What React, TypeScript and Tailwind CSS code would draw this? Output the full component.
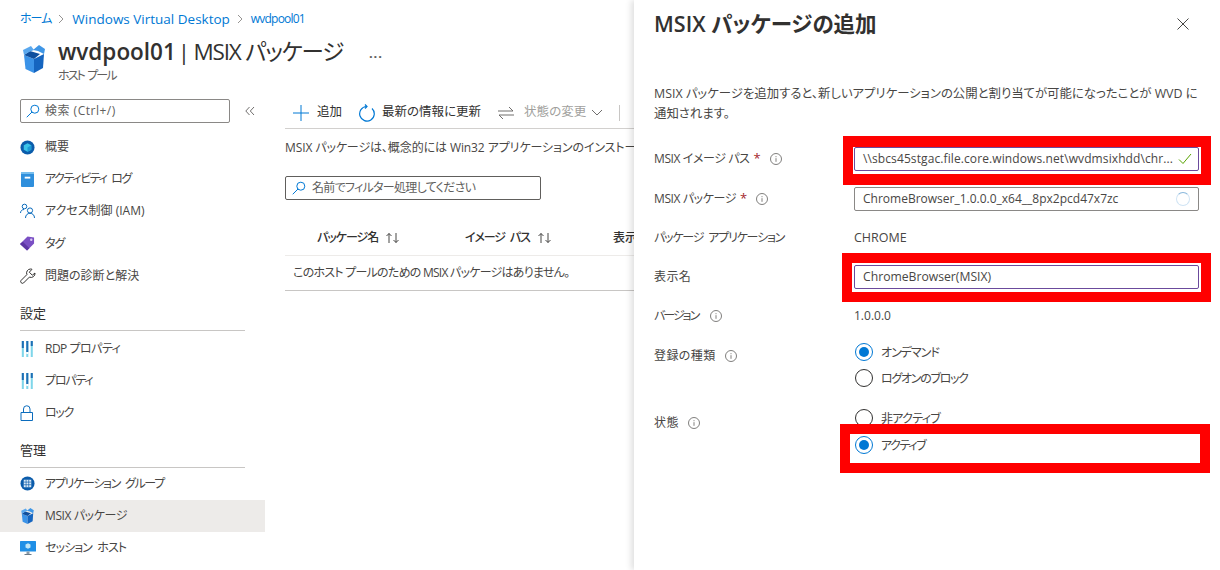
import React from "react";

const font = {
  fontFamily: '"Open Sans", "Noto Sans CJK JP", sans-serif',
  fontFeatureSettings: '"palt"',
};

function SearchIcon() {
  return (
    <svg viewBox="0 0 14 14" className="h-[14px] w-[14px] shrink-0" fill="none" stroke="#0078d4" strokeWidth="1">
      <circle cx="8.800" cy="5.200" r="4" />
      <path d="M5.900 8.100 1 13" strokeLinecap="round" />
    </svg>
  );
}

function InfoIcon() {
  return (
    <svg viewBox="0 0 12 12" className="h-3 w-3 shrink-0" fill="none" stroke="#605e5c" strokeWidth="0.8">
      <circle cx="6" cy="6" r="5.500" />
      <path d="M6 5.200v3.600M6 3.200v1" />
    </svg>
  );
}

function SortIcon() {
  return (
    <svg viewBox="0 0 16 12" className="h-3 w-4 shrink-0" fill="none" stroke="#323130" strokeWidth="0.9">
      <path d="M4 11V1.500M1.500 4 4 1.500 6.500 4M11 1v9.500M8.500 8l2.500 2.500L13.500 8" />
    </svg>
  );
}

function BoxIcon({ w, h }: { w: number; h: number }) {
  return (
    <svg viewBox="0 0 22 28" width={w} height={h} className="shrink-0">
      <path d="M1 10 11 14v14L2.500 24z" fill="#3b93e8" />
      <path d="M11 14l10-5-1 14-9 5z" fill="#1565c0" />
      <path d="M11 14 1 10l6-4 10 3z" fill="#0f4f9e" />
      <path d="M1 10 0 5l8-4 3 4-5 2z" fill="#5aa8ee" />
      <path d="M10 5l6-5 6 4-1 5-6-3z" fill="#3f96e6" />
    </svg>
  );
}

function SlidersIcon() {
  return (
    <svg viewBox="0 0 16 16" preserveAspectRatio="none" className="ml-[1px] h-4 w-[13px] shrink-0">
      <rect x="1" y="0" width="2.500" height="16" fill="#7fd6ea" />
      <rect x="1" y="0" width="2.500" height="7" fill="#1f6fb5" />
      <rect x="6.500" y="0" width="2.500" height="16" fill="#7fd6ea" />
      <rect x="6.500" y="0" width="2.500" height="11" fill="#1f6fb5" />
      <rect x="6.500" y="11" width="2.500" height="2" fill="#ffffff" />
      <rect x="12" y="0" width="2.500" height="16" fill="#7fd6ea" />
      <rect x="12" y="0" width="2.500" height="5" fill="#1f6fb5" />
    </svg>
  );
}

function OverviewIcon() {
  return (
    <svg viewBox="0 0 16 16" className="h-[15px] w-[15px] shrink-0">
      <circle cx="8" cy="8" r="7.500" fill="#0b5cab" />
      <path d="M8 3.500 12 5.700v4.600L8 12.500 4 10.300V5.700z" fill="#3cc4e8" />
      <path d="M8 8 12 5.700v4.600L8 12.500z" fill="#1c9ad6" />
    </svg>
  );
}

function LogIcon() {
  return (
    <svg viewBox="0 0 14 16" className="ml-[1px] h-[15px] w-[13px] shrink-0">
      <rect width="14" height="16" rx="1" fill="#2f8fdc" />
      <rect x="0" y="0" width="14" height="2" fill="#7cc0ee" />
      <rect x="4" y="5" width="6" height="2" fill="#ffffff" />
    </svg>
  );
}

function UsersIcon() {
  return (
    <svg viewBox="0 0 16 16" className="h-4 w-4 shrink-0" fill="none" stroke="#0b6cbd" strokeWidth="1">
      <circle cx="4.500" cy="3.500" r="2.300" />
      <path d="M.5 10c0-2 1.500-3.500 3.500-3.500" />
      <circle cx="10" cy="7.500" r="2.600" />
      <path d="M5.500 15c0-3 2-4.700 4.500-4.700s4.500 1.700 4.500 4.700" />
    </svg>
  );
}

function TagIcon() {
  return (
    <svg viewBox="0 0 16 16" className="h-[15px] w-[15px] shrink-0">
      <path d="M0 8.500 8 .5l7 1v6.500L7.500 15.500z" fill="#7a4fc4" />
      <path d="M0 8.500 7.500 15.500 10 13 3 6z" fill="#5c35a3" />
      <circle cx="12" cy="4" r="1.300" fill="#d9c9f2" />
    </svg>
  );
}

function WrenchIcon() {
  return (
    <svg viewBox="0 0 16 16" className="h-4 w-4 shrink-0" fill="none" stroke="#323130" strokeWidth="1">
      <path d="M10.500 1a4 4 0 0 0-3.600 5.600L1 12.500a1.800 1.800 0 0 0 2.500 2.500l5.900-5.900A4 4 0 0 0 15 5l-2.700 2.200-3-3L12 1.300A4 4 0 0 0 10.500 1z" strokeLinejoin="round" />
    </svg>
  );
}

function LockIcon() {
  return (
    <svg viewBox="0 0 14 16" className="h-4 w-[14px] shrink-0" fill="none" stroke="#0b6cbd" strokeWidth="1">
      <path d="M1 7.500h11.500V15.500H1z" />
      <path d="M3.500 7.500V4a3.200 3.200 0 0 1 6.500 0v3.500" />
    </svg>
  );
}

function GridIcon() {
  return (
    <svg viewBox="0 0 16 16" className="h-[15px] w-[15px] shrink-0">
      <circle cx="8" cy="8" r="7.500" fill="#0b5cab" />
      <path d="M4 4h8v8H4z" fill="#dcebf7" />
      <path d="M6.500 4v8M9.300 4v8M4 6.500h8M4 9.300h8" stroke="#0b5cab" strokeWidth="0.7" />
    </svg>
  );
}

function MonitorIcon() {
  return (
    <svg viewBox="0 0 16 16" className="h-4 w-4 shrink-0">
      <rect x="0" y="1" width="16" height="10.500" rx="0.500" fill="#1f8fe6" />
      <path d="M8 3.200 10.500 4.600v2.800L8 8.800 5.500 7.400V4.600z" fill="#bfe6f7" />
      <path d="M6.500 11.500h3V14h-3z" fill="#8a9aa8" />
      <path d="M4.500 14h7v1h-7z" fill="#6b7b88" />
    </svg>
  );
}

function Chevron() {
  return (
    <svg viewBox="0 0 6 10" className="h-[10px] w-[6px] shrink-0" fill="none" stroke="#8a8886" strokeWidth="0.9">
      <path d="M1 1l4 4-4 4" />
    </svg>
  );
}

function NavItem({ icon, label, active, tracking }: { icon: React.ReactNode; label: string; active?: boolean; tracking?: string }) {
  return (
    <div className={`flex h-[32.2px] items-center pl-[20px] text-[12px] text-[#484644] ${active ? "bg-[#edebe9]" : ""}`}>
      <span className="flex w-[25px] shrink-0 items-center">{icon}</span>
      <span className={tracking}>{label}</span>
    </div>
  );
}

function SectionTitle({ children }: { children: React.ReactNode }) {
  return (
    <div className="mx-[20px] flex h-[32px] items-end border-b border-[#c8c6c4] pb-[8px] text-[13px] leading-[18px] text-[#323130]">
      {children}
    </div>
  );
}

function Radio({ label, checked, tracking }: { label: string; checked?: boolean; tracking: string }) {
  return (
    <div className="flex h-[18px] items-center gap-[8px] text-[12px] text-[#484644]">
      <span
        className={`flex h-[18px] w-[18px] items-center justify-center rounded-full border ${checked ? "border-[#0078d4]" : "border-[#323130]"}`}
      >
        {checked && <span className="h-[10px] w-[10px] rounded-full bg-[#0078d4]" />}
      </span>
      <span className={`pt-[1px] ${tracking}`}>{label}</span>
    </div>
  );
}

function FieldLabel({ text, required, info, tracking, infoGap }: { text: string; required?: boolean; info?: boolean; tracking?: string; infoGap?: string }) {
  return (
    <div className="flex w-[200px] shrink-0 items-center text-[12px] text-[#484644]">
      <span className={tracking}>{text}</span>
      {required && <span className="ml-[4px] text-[13px] text-[#a4262c]">*</span>}
      {info && (
        <span className={`flex ${infoGap ?? "ml-[9px]"}`}>
          <InfoIcon />
        </span>
      )}
    </div>
  );
}

export default function App() {
  return (
    <div style={font} className="relative flex h-[570px] w-[1220px] overflow-hidden bg-white text-[#323130]">
      {/* left blade */}
      <div className="flex w-[634px] shrink-0 flex-col">
        <div className="flex h-[38px] items-center pl-[20px] text-[#0078d4]">
          <span className="text-[12px] tracking-[-1px]">ホーム</span>
          <span className="ml-[7px] mr-[8px] flex"><Chevron /></span>
          <span className="text-[13.500px]">Windows Virtual Desktop</span>
          <span className="ml-[7px] mr-[8px] flex"><Chevron /></span>
          <span className="text-[12px] tracking-[-0.800px]">wvdpool01</span>
        </div>
        <div className="flex h-[52px] pl-[23px]">
          <span className="mt-[7px] flex w-[35px] shrink-0">
            <BoxIcon w={22} h={28} />
          </span>
          <div>
            <div className="whitespace-nowrap text-[22.500px] leading-[28px] text-[#323130]">
              <span className="font-semibold">wvdpool01</span>{" "}
              <span className="ml-[-4px] tracking-[-1.200px]">| MSIX パッケージ</span>
              <span className="ml-[26px] align-[2px] text-[13px] font-bold tracking-[1px] text-[#605e5c]">...</span>
            </div>
            <div className="mt-[2px] text-[12px] leading-[14px] tracking-[-1.900px] [word-spacing:2px] text-[#605e5c]">ホスト プール</div>
          </div>
        </div>
        <div className="flex min-h-0 flex-1">
          {/* sidebar */}
          <div className="w-[265px] shrink-0">
            <div className="mt-[9px] flex h-[24px] items-center pl-[20px]">
              <div className="flex h-[24px] w-[210px] items-center gap-[5px] rounded-[2px] border border-[#8a8886] pl-[5px] text-[12px] tracking-[0.500px] text-[#605e5c]">
                <SearchIcon />
                <span>検索 (Ctrl+/)</span>
              </div>
              <svg viewBox="0 0 10 10" className="ml-[15px] h-[10px] w-[10px]" fill="none" stroke="#605e5c" strokeWidth="0.9">
                <path d="M4.500 1 .8 5l3.700 4M9 1 5.300 5 9 9" />
              </svg>
            </div>
            <div className="mt-[8px]">
              <NavItem icon={<OverviewIcon />} label="概要" />
              <NavItem icon={<LogIcon />} label="アクティビティ ログ" tracking="tracking-[-1.400px] [word-spacing:3px]" />
              <NavItem icon={<UsersIcon />} label="アクセス制御 (IAM)" />
              <NavItem icon={<TagIcon />} label="タグ" tracking="tracking-[-1px]" />
              <NavItem icon={<WrenchIcon />} label="問題の診断と解決" />
            </div>
            <div className="mt-[7px]">
              <SectionTitle>設定</SectionTitle>
              <div className="mt-[2px]">
                <NavItem icon={<SlidersIcon />} label="RDP プロパティ" tracking="tracking-[-0.500px]" />
                <NavItem icon={<SlidersIcon />} label="プロパティ" tracking="tracking-[-1.200px]" />
                <NavItem icon={<LockIcon />} label="ロック" tracking="tracking-[-1.300px]" />
              </div>
            </div>
            <div className="mt-[6px]">
              <SectionTitle>管理</SectionTitle>
              <NavItem icon={<GridIcon />} label="アプリケーション グループ" tracking="tracking-[-1.300px] [word-spacing:3px]" />
              <NavItem icon={<span className="ml-[1px] flex"><BoxIcon w={13} h={16} /></span>} label="MSIX パッケージ" active tracking="tracking-[-0.400px]" />
              <NavItem icon={<MonitorIcon />} label="セッション ホスト" tracking="tracking-[-0.900px] [word-spacing:3px]" />
            </div>
          </div>
          {/* content */}
          <div className="min-w-0 flex-1 pl-[20px]">
            <div className="mt-[7px] flex h-[32px] items-center border-b border-[#d2d0ce] pl-[8px] text-[12.500px] text-[#323130]">
              <svg viewBox="0 0 16 16" className="h-4 w-4" fill="none" stroke="#0078d4" strokeWidth="1">
                <path d="M8 0v16M0 8h16" />
              </svg>
              <span className="ml-[8px]">追加</span>
              <svg viewBox="0 0 18 18" className="ml-[16px] h-[18px] w-[18px]" fill="none" stroke="#0078d4" strokeWidth="1.200">
                <path d="M8.500 2.500A7.300 7.300 0 1 0 14 4.500" />
                <path d="M7 .5 9 2.500 7 4.500" />
              </svg>
              <span className="ml-[6px]">最新の情報に更新</span>
              <svg viewBox="0 0 16 14" className="ml-[17px] h-[14px] w-4" fill="none" stroke="#605e5c" strokeWidth="0.9">
                <path d="M0 5h15M11 1l4 4M16 9H1M5 13 1 9" />
              </svg>
              <span className="ml-[10px] text-[#a19f9d]">状態の変更</span>
              <svg viewBox="0 0 12 8" className="ml-[5px] h-[8px] w-3" fill="none" stroke="#605e5c" strokeWidth="0.9">
                <path d="M1 1l5 5 5-5" />
              </svg>
              <span className="ml-[16px] h-[16px] border-l border-[#c8c6c4]" />
            </div>
            <div className="mt-[10px] whitespace-nowrap text-[12px] leading-[18px] tracking-[-0.100px] text-[#484644]">
              MSIX パッケージは、概念的には Win32 アプリケーションのインストール
            </div>
            <div className="mt-[19px] flex h-[24px] w-[256px] items-center gap-[6px] rounded-[2px] border border-[#605e5c] pl-[6px] text-[12px] tracking-[-0.700px] text-[#605e5c]">
              <SearchIcon />
              <span>名前でフィルター処理してください</span>
            </div>
            <div className="mt-[26px] flex h-[30px] items-center whitespace-nowrap border-b border-[#edebe9] pb-[5px] text-[12px] font-medium text-[#323130]">
              <div className="flex w-[148px] shrink-0 items-center gap-[7px] pl-[32px]">
                <span className="tracking-[-1px]">パッケージ名</span>
                <SortIcon />
              </div>
              <div className="flex w-[148px] shrink-0 items-center gap-[7px] pl-[32px]">
                <span className="tracking-[-1.100px] [word-spacing:3px]">イメージ パス</span>
                <SortIcon />
              </div>
              <div className="pl-[32px]">表示</div>
            </div>
            <div className="flex h-[35px] items-center whitespace-nowrap border-b border-[#c8c6c4] pl-[8px] text-[12px] tracking-[-0.750px] text-[#484644]">
              このホスト プールのための MSIX パッケージはありません。
            </div>
          </div>
        </div>
      </div>

      {/* add package panel */}
      <div className="absolute bottom-0 left-[634px] right-0 top-0 bg-white pl-[20px] pr-[21px] shadow-[-3px_0_6px_rgba(0,0,0,0.12)]">
        <div className="flex h-[47px] items-center justify-between">
          <div className="text-[21.500px] font-semibold leading-[28px] text-[#323130]">MSIX パッケージの追加</div>
          <svg viewBox="0 0 12 12" className="mr-[10px] h-3 w-3" fill="none" stroke="#323130" strokeWidth="0.9">
            <path d="M.5.5l11 11M11.500.5l-11 11" />
          </svg>
        </div>
        <div className="mt-[37px] whitespace-nowrap text-[12.400px] leading-[20px] text-[#484644]">
          MSIX パッケージを追加すると、新しいアプリケーションの公開と割り当てが可能になったことが WVD に
          <br />
          通知されます。
        </div>
        <div className="mt-[23px] flex h-[24px]">
          <FieldLabel text="MSIX イメージ パス" required info tracking="tracking-[-0.400px]" />
          <div className="flex w-[345px] items-center rounded-[2px] border border-[#6b4a9c] pl-[8px] pr-[6px] text-[12px] tracking-[0.100px] text-[#484644]">
            <span className="min-w-0 flex-1 whitespace-nowrap">\\sbcs45stgac.file.core.windows.net\wvdmsixhdd\chr...</span>
            <svg viewBox="0 0 14 12" className="ml-[6px] h-3 w-[14px] shrink-0" fill="none" stroke="#57a300" strokeWidth="1">
              <path d="M1 6.500 5 10.500 13 1" />
            </svg>
          </div>
        </div>
        <div className="mt-[16px] flex h-[24px]">
          <FieldLabel text="MSIX パッケージ" required info tracking="tracking-[-0.400px]" />
          <div className="flex w-[345px] items-center justify-between rounded-[2px] border border-[#8a8886] pl-[8px] pr-[8px] text-[12px] text-[#484644]">
            <span>ChromeBrowser_1.0.0.0_x64__8px2pcd47x7zc</span>
            <span className="h-[14px] w-[14px] rounded-full border border-[#d0e4f4] border-t-[#8ab8dc]" />
          </div>
        </div>
        <div className="mt-[15px] flex h-[24px] items-center">
          <FieldLabel text="パッケージ アプリケーション" tracking="tracking-[-1.200px] [word-spacing:3px]" />
          <span className="text-[12.500px] text-[#484644]">CHROME</span>
        </div>
        <div className="mt-[15px] flex h-[24px]">
          <FieldLabel text="表示名" tracking="tracking-[0.400px]" />
          <div className="flex w-[345px] items-center rounded-[2px] border border-[#6b4a9c] pl-[8px] text-[12.200px] text-[#484644]">
            ChromeBrowser(MSIX)
          </div>
        </div>
        <div className="mt-[15px] flex h-[24px] items-center">
          <FieldLabel text="バージョン" info tracking="tracking-[-2px]" infoGap="ml-[12px]" />
          <span className="text-[12px] text-[#484644]">1.0.0.0</span>
        </div>
        <div className="mt-[15px] flex">
          <div className="h-[24px] pt-[4px]">
            <FieldLabel text="登録の種類" info tracking="tracking-[0.400px]" />
          </div>
          <div className="flex flex-col gap-[8px] pl-[1px]">
            <Radio label="オンデマンド" checked tracking="tracking-[-1px]" />
            <Radio label="ログオンのブロック" tracking="tracking-[-1.300px]" />
          </div>
        </div>
        <div className="mt-[22px] flex">
          <div className="h-[24px] pt-[5px]">
            <FieldLabel text="状態" info tracking="tracking-[0.400px]" />
          </div>
          <div className="flex flex-col gap-[9px] pl-[1px]">
            <Radio label="非アクティブ" tracking="tracking-[-0.700px]" />
            <Radio label="アクティブ" checked tracking="tracking-[-1.400px]" />
          </div>
        </div>
      </div>

      {/* red highlight frames drawn on top of the screenshot */}
      <div className="absolute left-[843px] top-[136px] h-[49px] w-[368px] border-x-[10px] border-y-[11px] border-[#ff0000]" />
      <div className="absolute left-[842px] top-[253px] h-[49px] w-[369px] border-[10px] border-[#ff0000]" />
      <div className="absolute left-[840px] top-[424px] h-[49px] w-[370px] border-[10px] border-[#ff0000]" />
    </div>
  );
}
